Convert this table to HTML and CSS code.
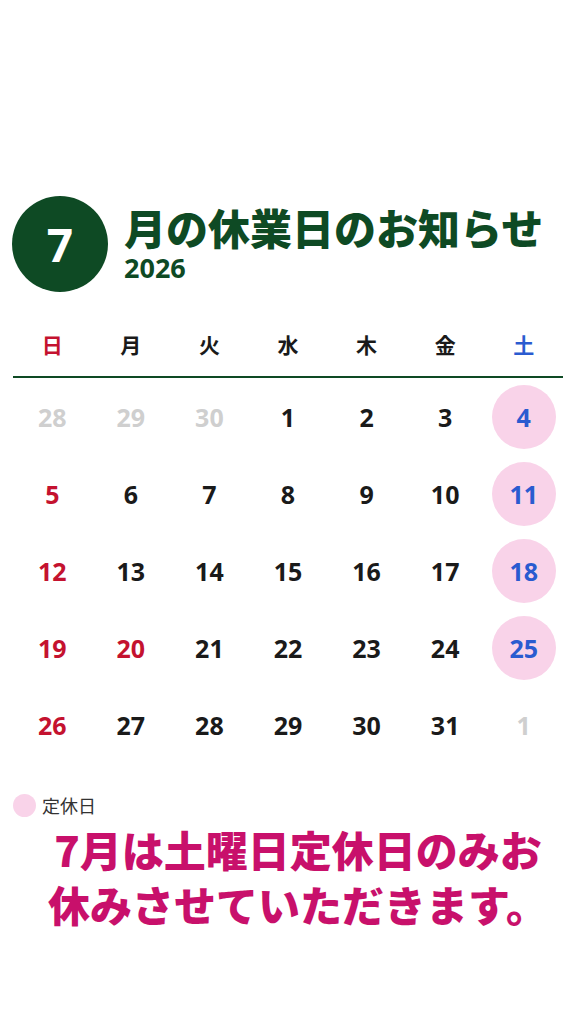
FILE: index.html
```html
<!DOCTYPE html>
<html lang="ja">
<head>
  <meta charset="UTF-8" />
  <meta name="viewport" content="width=device-width, initial-scale=1.0"/>
  <title>7月の休業日のお知らせ</title>
  <link rel="stylesheet" href="styles.css">
</head>
<body>

  <header class="head">
    <div class="month-badge">7</div>
    <div class="head-text">
      <h1>月の休業日のお知らせ</h1>
      <div class="year">2026</div>
    </div>
  </header>

  <section class="calendar">
    <div class="weekdays">
      <div class="sun">日</div>
      <div>月</div>
      <div>火</div>
      <div>水</div>
      <div>木</div>
      <div>金</div>
      <div class="sat">土</div>
    </div>

    <div class="days">
      <div class="day other">28</div>
      <div class="day other">29</div>
      <div class="day other">30</div>
      <div class="day">1</div>
      <div class="day">2</div>
      <div class="day">3</div>
      <div class="day sat off"><span>4</span></div>

      <div class="day sun">5</div>
      <div class="day">6</div>
      <div class="day">7</div>
      <div class="day">8</div>
      <div class="day">9</div>
      <div class="day">10</div>
      <div class="day sat off"><span>11</span></div>

      <div class="day sun">12</div>
      <div class="day">13</div>
      <div class="day">14</div>
      <div class="day">15</div>
      <div class="day">16</div>
      <div class="day">17</div>
      <div class="day sat off"><span>18</span></div>

      <div class="day sun">19</div>
      <div class="day sun">20</div>
      <div class="day">21</div>
      <div class="day">22</div>
      <div class="day">23</div>
      <div class="day">24</div>
      <div class="day sat off"><span>25</span></div>

      <div class="day sun">26</div>
      <div class="day">27</div>
      <div class="day">28</div>
      <div class="day">29</div>
      <div class="day">30</div>
      <div class="day">31</div>
      <div class="day other">1</div>
    </div>
  </section>

  <div class="legend">
    <span class="legend-dot"></span>
    <span>定休日</span>
  </div>

  <p class="notice">7月は土曜日定休日のみお<br>休みさせていただきます。</p>

</body>
</html>
```

FILE: styles.css
```css
body {
  font-family: "Noto Sans", "Noto Sans CJK JP", sans-serif;
  background: #ffffff;
  color: #1a1a1a;
  margin: 0;
  padding: 196px 0 0;
  width: 576px;
}

.head {
  display: flex;
  align-items: center;
  gap: 16px;
  padding-left: 12px;
}

.month-badge {
  width: 96px;
  height: 96px;
  border-radius: 50%;
  background: #0e4a24;
  color: #ffffff;
  font-size: 46px;
  font-weight: 700;
  display: flex;
  align-items: center;
  justify-content: center;
}

.head-text {
  color: #0e4a24;
}

h1 {
  margin: 0;
  font-family: "Noto Sans CJK JP", sans-serif;
  font-size: 42px;
  line-height: 44px;
  font-weight: 900;
}

.year {
  margin-top: 4px;
  font-size: 27px;
  line-height: 30px;
  font-weight: 700;
}

.calendar {
  margin: 20px 13px 0;
}

.weekdays {
  display: grid;
  grid-template-columns: repeat(7, 1fr);
  height: 64px;
  align-items: center;
  text-align: center;
  font-family: "Noto Sans CJK JP", sans-serif;
  font-size: 21px;
  font-weight: 700;
  border-bottom: 2px solid #0e4a24;
}

.days {
  display: grid;
  grid-template-columns: repeat(7, 1fr);
  grid-auto-rows: 77px;
  font-size: 25px;
  font-weight: 700;
}

.day {
  display: flex;
  align-items: center;
  justify-content: center;
}

.sun {
  color: #c4122f;
}

.sat {
  color: #2a5bd0;
}

.other {
  color: #cfcfcf;
}

.off span {
  width: 64px;
  height: 64px;
  border-radius: 50%;
  background: #f9d3e9;
  display: flex;
  align-items: center;
  justify-content: center;
}

.legend {
  display: flex;
  align-items: center;
  gap: 6px;
  margin: 30px 0 0 13px;
  font-family: "Noto Sans CJK JP", sans-serif;
  font-size: 18px;
  color: #333333;
  height: 24px;
}

.legend-dot {
  width: 23px;
  height: 23px;
  border-radius: 50%;
  background: #f9d3e9;
}

.notice {
  margin: 4px 0 0;
  padding-left: 20px;
  text-align: center;
  font-family: "Noto Sans CJK JP", sans-serif;
  font-size: 42px;
  line-height: 55px;
  font-weight: 900;
  color: #c8106b;
}
```
